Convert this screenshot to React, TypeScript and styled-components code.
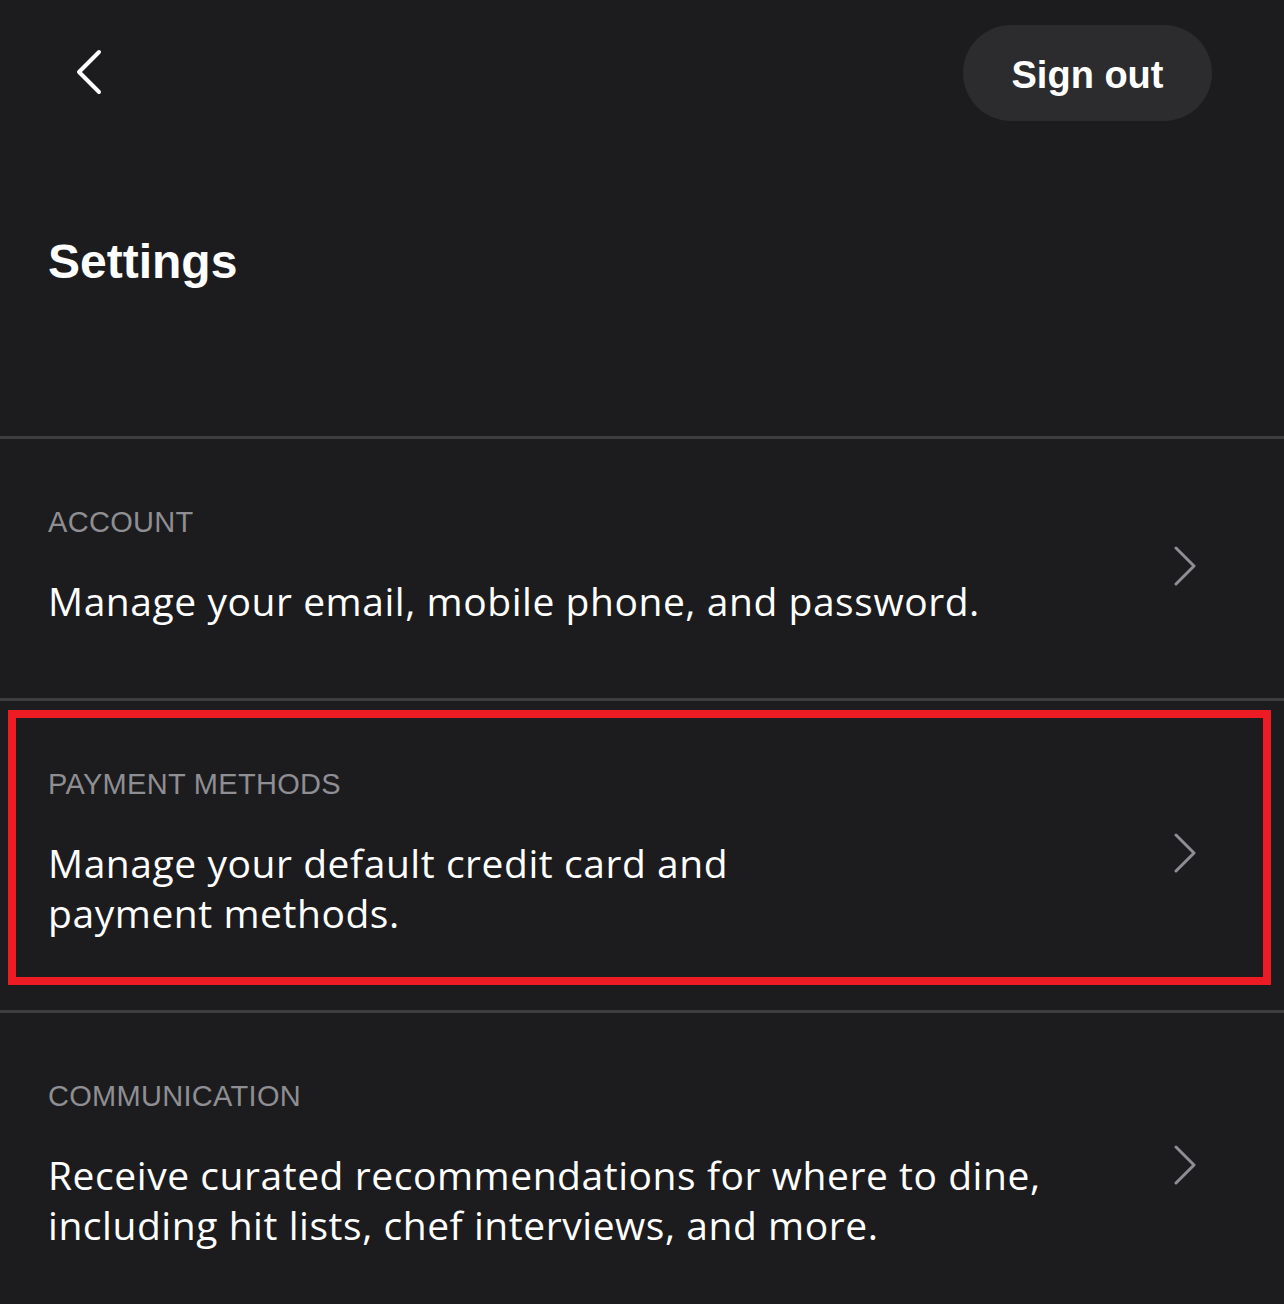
import React from "react";
import styled, { createGlobalStyle } from "styled-components";

const GlobalStyle = createGlobalStyle`
  html, body {
    margin: 0;
    padding: 0;
    background: #1c1c1e;
  }
  body {
    font-family: "Liberation Sans", Arial, sans-serif;
    color: #ffffff;
  }
`;

type Item = {
  label: string;
  lines: string[];
  highlighted?: boolean;
};

const items: Item[] = [
  { label: "ACCOUNT", lines: ["Manage your email, mobile phone, and password."] },
  {
    label: "PAYMENT METHODS",
    lines: ["Manage your default credit card and", "payment methods."],
    highlighted: true,
  },
  {
    label: "COMMUNICATION",
    lines: [
      "Receive curated recommendations for where to dine,",
      "including hit lists, chef interviews, and more.",
    ],
  },
];

const BackIcon = () => (
  <svg width="26" height="46" viewBox="0 0 26 46" fill="none">
    <polyline
      points="23,3 3,23 23,43"
      stroke="#ffffff"
      strokeWidth="4"
      strokeLinecap="round"
      strokeLinejoin="round"
    />
  </svg>
);

const ChevronIcon = () => (
  <svg width="24" height="40" viewBox="0 0 24 40" fill="none">
    <polyline
      points="3,2 21,20 3,38"
      stroke="#8e8e93"
      strokeWidth="3"
      strokeLinecap="round"
      strokeLinejoin="round"
    />
  </svg>
);

export default function App() {
  return (
    <Page>
      <GlobalStyle />
      <Header>
        <BackButton aria-label="Back">
          <BackIcon />
        </BackButton>
        <SignOut>Sign out</SignOut>
      </Header>
      <Title>Settings</Title>
      <List>
        {items.map((item) => (
          <Row key={item.label}>
            <RowText>
              <Label>{item.label}</Label>
              <Description>
                {item.lines.map((line, i) => (
                  <React.Fragment key={i}>
                    {i > 0 && <br />}
                    {line}
                  </React.Fragment>
                ))}
              </Description>
            </RowText>
            <ChevronWrap>
              <ChevronIcon />
            </ChevronWrap>
            {item.highlighted && <Highlight />}
          </Row>
        ))}
      </List>
    </Page>
  );
}

const Page = styled.div`
  width: 1284px;
  min-height: 1304px;
  background: #1c1c1e;
  overflow: hidden;
`;

const Header = styled.header`
  display: flex;
  align-items: center;
  justify-content: space-between;
  padding: 25px 72px 0 76px;
  height: 96px;
`;

const BackButton = styled.button`
  display: flex;
  align-items: center;
  background: none;
  border: 0;
  padding: 0;
  margin-top: -2px;
  cursor: pointer;
`;

const SignOut = styled.button`
  height: 96px;
  width: 249px;
  border: 0;
  border-radius: 48px;
  padding: 5px 0 0;
  background: #2c2c2e;
  color: #ffffff;
  font-family: "Liberation Sans", Arial, sans-serif;
  font-weight: 700;
  font-size: 38px;
  cursor: pointer;
`;

const Title = styled.h1`
  margin: 112px 0 0;
  padding: 0 48px;
  font-size: 48px;
  line-height: 58px;
  font-weight: 700;
  height: 58px;
`;

const List = styled.div`
  margin-top: 145px;
  border-top: 3px solid #3d3d40;
`;

const Row = styled.div`
  position: relative;
  display: flex;
  align-items: center;
  justify-content: space-between;
  padding: 65px 87px 72px 48px;
  border-bottom: 3px solid #3d3d40;
`;

const RowText = styled.div`
  display: flex;
  flex-direction: column;
  gap: 36px;
`;

const Label = styled.div`
  font-size: 29px;
  line-height: 36px;
  letter-spacing: 0.3px;
  color: #8e8e93;
`;

const Description = styled.div`
  font-family: "Open Sans", "Liberation Sans", sans-serif;
  font-size: 39px;
  line-height: 50px;
  letter-spacing: 0.55px;
  color: #ffffff;
`;

const ChevronWrap = styled.div`
  display: flex;
  margin-top: 2px;
`;

const Highlight = styled.div`
  position: absolute;
  top: 9px;
  bottom: 25px;
  left: 8px;
  right: 13px;
  border: 8px solid #ed1c24;
  pointer-events: none;
`;
